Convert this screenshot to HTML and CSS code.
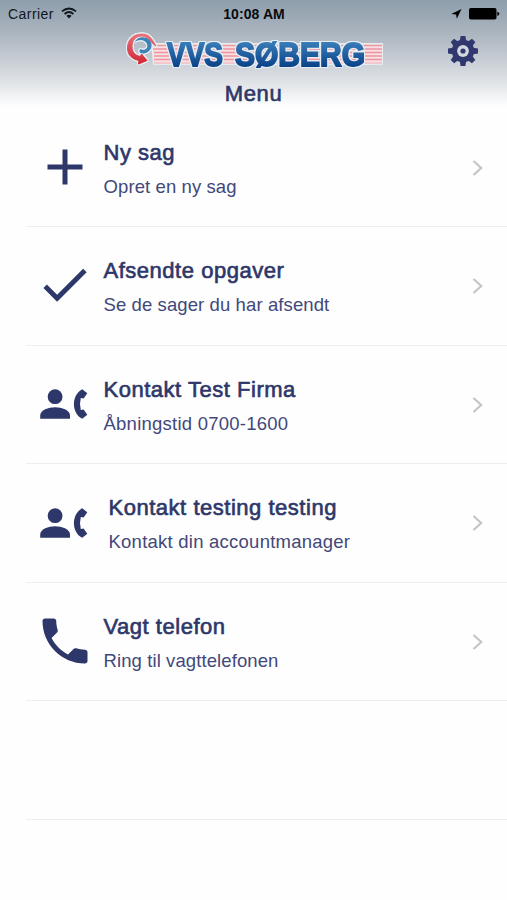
FILE: index.html
```html
<!DOCTYPE html>
<html lang="da">
<head>
<meta charset="utf-8">
<title>Menu</title>
<link rel="stylesheet" href="styles.css">
</head>
<body>
<svg class="defs" aria-hidden="true">
  <symbol id="contact" viewBox="0 0 60 60">
    <circle cx="20.1" cy="22.7" r="7.4"/>
    <path d="M5.2 44.7V41.5C5.2 36 13.5 33.2 20.1 33.2S35 36 35 41.5V44.7Z"/>
    <path d="M47.2 15.2L52.3 19.3L48.6 24.4L45.8 24Q44.2 30 45.8 36L48.6 35.6L52.3 40.7L47.2 44.8C36.2 39 36.2 21 47.2 15.2Z"/>
  </symbol>
  <symbol id="chevron" viewBox="0 0 12 18">
    <path d="M1.5 2L9.2 9L1.5 16" fill="none" stroke="#c5c5c8" stroke-width="2.2"/>
  </symbol>
</svg>
<header class="header">
  <div class="status">
    <div class="carrier"><span>Carrier</span>
      <svg class="wifi" viewBox="0 0 16 12" fill="none" stroke="#10171d" stroke-width="1.9"><path d="M1 4.4Q8 -1.6 15 4.4M3.6 7Q8 3.2 12.4 7"/><path d="M5.4 8.7Q8 6.6 10.6 8.7L8 11.4Z" fill="#10171d" stroke="none"/></svg>
    </div>
    <div class="clock">10:08 AM</div>
    <div class="power">
      <svg class="location" viewBox="0 0 11 10"><path d="M10.5 0L5.8 9.7L5.1 5.6L.3 5Z"/></svg>
      <svg class="battery" viewBox="0 0 31 12"><rect width="27.5" height="11.5" rx="1.8"/><path d="M28.3 3.7Q30.4 4.3 30.4 5.8T28.3 7.9Z"/></svg>
    </div>
  </div>
  <div class="brand">
    <svg class="logo" viewBox="0 0 262 44">
      <defs>
        <linearGradient id="blue" gradientUnits="userSpaceOnUse" x1="0" y1="12" x2="0" y2="38"><stop offset="0" stop-color="#3b80bb"/><stop offset="1" stop-color="#0a4187"/></linearGradient>
        <linearGradient id="red" gradientUnits="userSpaceOnUse" x1="0" y1="4" x2="0" y2="36"><stop offset="0" stop-color="#e8747c"/><stop offset="1" stop-color="#d02430"/></linearGradient>
      </defs>
      <path d="M29 15H259V35H31Z" fill="#f5e1e5" stroke="#e5ecef" stroke-width="2"/>
      <path d="M29 16.5H259M30 20H259M31 23.5H259M31 27H259M31 30.5H259" stroke="#ef949d" stroke-width="1.7"/>
      <path d="M31 34H259" stroke="#f4bcc3" stroke-width="1.4"/>
      <g class="emblem">
        <path d="M33 17C30 13 28 5 19 5C10 5 4.5 11 4.5 19C4.5 26 9 30 16 31.5L15.5 35L24 31.5L18.5 25L17.5 27.5C12 26.5 9 23 9 17.5C9 11 13 7 19 7C25 7 27 13 33 17Z" fill="url(#red)" stroke="url(#red)"/>
        <path d="M11.5 13.5C14 7 23 6.5 27 11.5C31 17 27 24 20.5 24.5C18 24.6 16 23.5 16.5 21.5C17 19.5 19 20.5 20 21C24 20.5 25.5 17.5 23.5 14C21 10.5 15.5 10 11.5 13.5Z" fill="#3d83ba"/>
      </g>
      <g class="wordmark">
        <text x="44" y="37" textLength="56" lengthAdjust="spacingAndGlyphs">VVS</text>
        <text x="112" y="37" textLength="130" lengthAdjust="spacingAndGlyphs">SØBERG</text>
      </g>
    </svg>
    <svg class="gear" viewBox="-16 -16 32 32">
      <path id="tooth" d="M-3.2 -10L-2.4 -15H2.4L3.2 -10V10L2.4 15H-2.4L-3.2 10Z"/><use href="#tooth" transform="rotate(45)"/><use href="#tooth" transform="rotate(90)"/><use href="#tooth" transform="rotate(135)"/>
      <circle r="11.2"/><circle r="5.9" fill="#d3d8df"/><circle r="2.6"/>
    </svg>
  </div>
  <h1>Menu</h1>
</header>
<main class="menu">
  <section class="row">
    <svg class="icon" viewBox="0 0 24 24"><path d="M19 13h-6v6h-2v-6H5v-2h6V5h2v6h6z"/></svg>
    <div class="label"><h2>Ny sag</h2><p>Opret en ny sag</p></div>
    <svg class="chevron"><use href="#chevron"/></svg>
  </section>
  <section class="row">
    <svg class="icon check" viewBox="0 0 24 24"><path d="M9 16.17L4.83 12l-1.42 1.41L9 19 21 7l-1.41-1.41z"/></svg>
    <div class="label"><h2>Afsendte opgaver</h2><p>Se de sager du har afsendt</p></div>
    <svg class="chevron"><use href="#chevron"/></svg>
  </section>
  <section class="row">
    <svg class="icon"><use href="#contact"/></svg>
    <div class="label"><h2>Kontakt Test Firma</h2><p class="wide">Åbningstid 0700-1600</p></div>
    <svg class="chevron"><use href="#chevron"/></svg>
  </section>
  <section class="row indented">
    <svg class="icon"><use href="#contact"/></svg>
    <div class="label"><h2>Kontakt testing testing</h2><p class="wide">Kontakt din accountmanager</p></div>
    <svg class="chevron"><use href="#chevron"/></svg>
  </section>
  <section class="row">
    <svg class="icon" viewBox="0 0 24 24"><path d="M6.62 10.79c1.44 2.83 3.76 5.14 6.59 6.59l2.2-2.2c.27-.27.67-.36 1.02-.24 1.12.37 2.33.57 3.57.57.55 0 1 .45 1 1V20c0 .55-.45 1-1 1-9.39 0-17-7.61-17-17 0-.55.45-1 1-1h3.5c.55 0 1 .45 1 1 0 1.25.2 2.45.57 3.57.11.35.03.74-.25 1.02z"/></svg>
    <div class="label"><h2>Vagt telefon</h2><p>Ring til vagttelefonen</p></div>
    <svg class="chevron"><use href="#chevron"/></svg>
  </section>
  <section class="row"></section>
</main>
</body>
</html>
```
FILE: styles.css
```css
* { box-sizing: border-box; }
body {
  margin: 0;
  height: 900px;
  overflow: hidden;
  background: #fefefe;
  color: #2e3769;
  font-family: "Liberation Sans", Arial, sans-serif;
}
svg { display: block; flex: none; }
.defs { width: 0; height: 0; position: absolute; }
.header {
  height: 108.5px;
  background: linear-gradient(#8e9eac 0, #a6b1bb 28px, #c2c9d1 56px, #e2e5e8 84px, #fefefe 106px);
}
.status {
  height: 28px;
  padding: 0 7px 0 8px;
  display: grid;
  grid-template-columns: 1fr auto 1fr;
  align-items: center;
  font-size: 14px;
  color: #10171d;
}
.carrier { display: flex; align-items: center; gap: 7px; letter-spacing: .45px; }
.wifi { width: 16px; height: 12px; margin-top: -2px; }
.clock { font-size: 14px; font-weight: bold; letter-spacing: .1px; color: #080b0e; }
.power { display: flex; justify-content: flex-end; align-items: center; gap: 7px; }
.location { width: 11px; height: 10px; }
.battery { width: 31px; height: 12px; margin-top: -1px; }
.brand {
  height: 46px;
  padding: 0 28px 0 123px;
  display: flex;
  justify-content: space-between;
  align-items: center;
}
.logo { width: 262px; height: 44px; }
.emblem, .wordmark {
  filter: drop-shadow(1px 0 .5px #e6edf2) drop-shadow(-1px 0 .5px #e6edf2) drop-shadow(0 1px .5px #e6edf2) drop-shadow(0 -1px .5px #e6edf2);
}
.wordmark {
  font: bold 34px "Liberation Sans", Arial, sans-serif;
  fill: url(#blue);
  stroke: url(#blue);
  stroke-width: 1.8px;
}
.gear { width: 32px; height: 32px; fill: #30386f; }
h1, h2, p { margin: 0; font-weight: normal; white-space: nowrap; }
h1, h2 { font-size: 22px; line-height: 26px; -webkit-text-stroke: .65px #2e3769; }
h1 { line-height: 40px; text-align: center; letter-spacing: .6px; }
.row {
  height: 118.5px;
  margin-left: 26px;
  padding: 0 23px 0 8.5px;
  border-bottom: 1.5px solid #eeeeef;
  display: flex;
  align-items: center;
}
.icon { width: 60px; height: 60px; fill: #2e3769; }
.check { width: 59px; height: 59px; margin: -3px 1px 0 0; }
.label { flex: 1; padding: 3px 0 0 9px; }
.indented .label { padding-left: 14px; }
h2 { letter-spacing: .52px; }
p { margin-top: 10px; font-size: 18.5px; line-height: 22px; letter-spacing: .1px; color: #41487a; }
.wide { letter-spacing: .24px; }
.chevron { width: 12px; height: 18px; margin-top: 1px; }
```
